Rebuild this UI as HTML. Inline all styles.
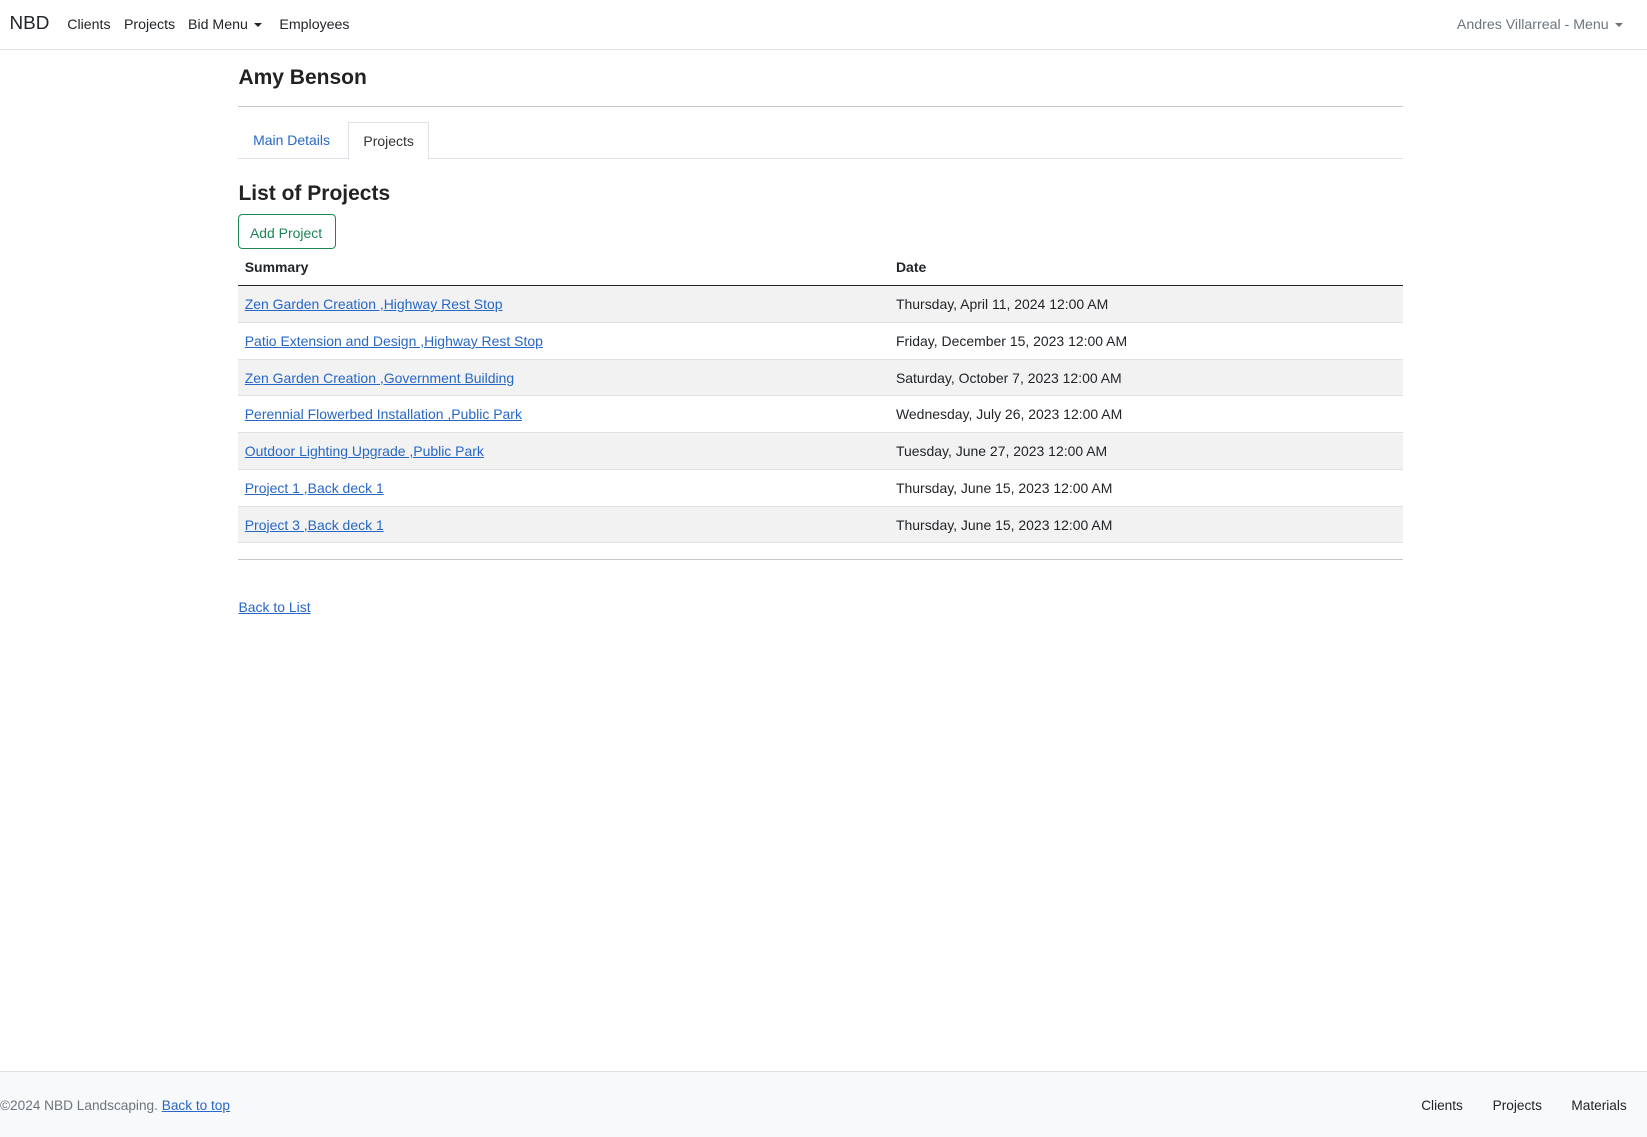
<!DOCTYPE html>
<html><head><meta charset="utf-8"><style>
html{zoom:1.0504}
*{box-sizing:border-box}
body{margin:0;width:1568px;height:1082px;position:relative;font-family:"Liberation Sans",sans-serif;font-size:13.3px;color:#212529;background:#fff;overflow:hidden}
a{color:#2767c6}
.nav{position:absolute;left:0;top:0;width:1568px;height:48px;border-bottom:1px solid #dee2e6}
.nav span{position:absolute;top:16px;font-size:13.5px;color:#212529}
.brand{left:9px!important;top:12px!important;font-size:18px!important}
.caret{display:inline-block;width:0;height:0;border-left:4px solid transparent;border-right:4px solid transparent;border-top:4.5px solid currentColor;vertical-align:2px;margin-left:6px}
.abs{position:absolute}
.hr{position:absolute;left:227px;width:1109px;height:1px;background:#c8c8c8}
table{position:absolute;left:227px;top:237px;width:1109px;border-collapse:collapse}
th{font-weight:bold;text-align:left;height:35px;padding:0 6px;border-bottom:1px solid #212529}
td{height:35px;padding:0 6px;border-bottom:1px solid #dee2e6}
tr.s td{background:#f2f2f2}
.foot{position:absolute;left:0;top:1020px;width:1568px;height:62px;background:#f8f9fa;border-top:1px solid #dee2e6}
.foot span{position:absolute;top:24px;font-size:13px}
</style></head><body>
<div class="nav">
<span class="brand">NBD</span>
<span style="left:64px">Clients</span>
<span style="left:118px">Projects</span>
<span style="left:179px">Bid Menu<i class="caret"></i></span>
<span style="left:266px">Employees</span>
<span style="left:1387px;color:#6c757d">Andres Villarreal - Menu<i class="caret"></i></span>
</div>
<div class="abs" style="left:227px;top:63px;font-size:20px;font-weight:bold;color:#222">Amy Benson</div>
<div class="hr" style="top:101px"></div>
<div class="abs" style="left:227px;top:150px;width:1109px;height:1px;background:#dee2e6"></div>
<div class="abs" style="left:241px;top:126px;color:#2767c6">Main Details</div>
<div class="abs" style="left:331px;top:116px;width:77px;height:36px;border:1px solid #dee2e6;border-bottom:1px solid #fff;background:#fff;padding:10px 0 0 14px;color:#333">Projects</div>
<div class="abs" style="left:227px;top:173px;font-size:20px;font-weight:bold;color:#222">List of Projects</div>
<div class="abs" style="left:227px;top:204px;width:93px;height:33px;border:1px solid #198754;border-radius:4px;color:#198754;padding:9px 0 0 10px">Add Project</div>
<table>
<tr><th style="width:620px">Summary</th><th>Date</th></tr>
<tr class="s"><td><a href="#">Zen Garden Creation ,Highway Rest Stop</a></td><td>Thursday, April 11, 2024 12:00 AM</td></tr>
<tr><td><a href="#">Patio Extension and Design ,Highway Rest Stop</a></td><td>Friday, December 15, 2023 12:00 AM</td></tr>
<tr class="s"><td><a href="#">Zen Garden Creation ,Government Building</a></td><td>Saturday, October 7, 2023 12:00 AM</td></tr>
<tr><td><a href="#">Perennial Flowerbed Installation ,Public Park</a></td><td>Wednesday, July 26, 2023 12:00 AM</td></tr>
<tr class="s"><td><a href="#">Outdoor Lighting Upgrade ,Public Park</a></td><td>Tuesday, June 27, 2023 12:00 AM</td></tr>
<tr><td><a href="#">Project 1 ,Back deck 1</a></td><td>Thursday, June 15, 2023 12:00 AM</td></tr>
<tr class="s"><td><a href="#">Project 3 ,Back deck 1</a></td><td>Thursday, June 15, 2023 12:00 AM</td></tr>
</table>
<div class="hr" style="top:532px"></div>
<div class="abs" style="left:227px;top:570px"><a href="#">Back to List</a></div>
<div class="foot">
<span style="left:0;color:#6c757d">©2024 NBD Landscaping. <a href="#">Back to top</a></span>
<span style="left:1353px">Clients</span>
<span style="left:1421px">Projects</span>
<span style="left:1496px">Materials</span>
</div>
</body></html>
